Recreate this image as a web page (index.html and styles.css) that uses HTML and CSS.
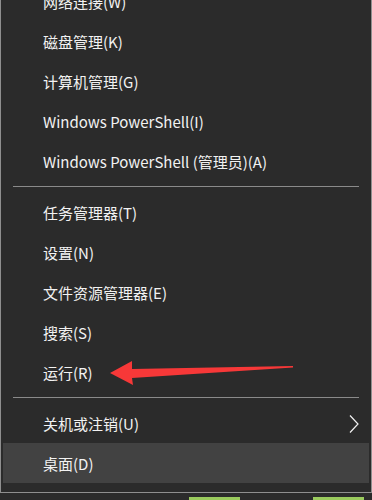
FILE: index.html
```html
<!DOCTYPE html>
<html lang="zh-CN">
<head>
<meta charset="utf-8">
<link rel="stylesheet" href="styles.css">
</head>
<body>
<div class="menu">
  <div class="item">网络连接(W)</div>
  <div class="item">磁盘管理(K)</div>
  <div class="item">计算机管理(G)</div>
  <div class="item">Windows PowerShell(I)</div>
  <div class="item">Windows PowerShell (管理员)(A)</div>
  <div class="sep"></div>
  <div class="item">任务管理器(T)</div>
  <div class="item">设置(N)</div>
  <div class="item">文件资源管理器(E)</div>
  <div class="item">搜索(S)</div>
  <div class="item">运行(R)</div>
  <div class="sep"></div>
  <div class="item has-sub">关机或注销(U)
    <svg class="chev" width="10" height="18" viewBox="0 0 10 18"><path d="M1 0.5 L9 9 L1 17.5" fill="none" stroke="#f2f2f2" stroke-width="1.2"/></svg>
  </div>
  <div class="item hover">桌面(D)</div>
</div>
<div class="taskbar">
  <div class="bar"></div>
  <div class="bar"></div>
</div>
<svg class="arrow" width="372" height="500" viewBox="0 0 372 500">
  <path d="M110 373 L132 361 L132 369 L293 366 L293 367.5 L132 378 L133 385 Z" fill="#f73838"/>
</svg>
</body>
</html>
```
FILE: styles.css
```css
html, body {
  margin: 0;
  padding: 0;
  background: #2b2b2b;
  overflow: hidden;
}
body {
  width: 372px;
  height: 500px;
  position: relative;
  font-family: "Noto Sans CJK SC", "Noto Sans", sans-serif;
}
.menu {
  margin-top: -19px;
  box-sizing: border-box;
  width: 372px;
  border: 1px solid #8f8f8f;
  border-top: none;
  padding: 0 2px 9px 2px;
  background: #2b2b2b;
}
.item {
  height: 40px;
  display: flex;
  align-items: center;
  padding-left: 40px;
  padding-right: 10px;
  color: #f2f2f2;
  font-size: 15px;
}
.item.has-sub {
  justify-content: space-between;
}
.chev {
  display: block;
  margin-top: 1px;
}
.item.hover {
  background: #424242;
}
.sep {
  height: 1px;
  background: #8a8a8a;
  margin: 5px 10px 5px 10px;
}
.taskbar {
  height: 7px;
  display: flex;
  align-items: flex-end;
  padding-left: 189px;
  gap: 73px;
}
.bar {
  width: 51px;
  height: 3px;
  background: #9bcb5e;
}
.arrow {
  position: absolute;
  left: 0;
  top: 0;
  pointer-events: none;
}
```
